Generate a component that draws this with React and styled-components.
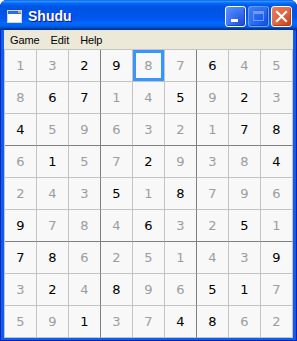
import React from 'react'
import styled, { createGlobalStyle } from 'styled-components'

const GlobalStyle = createGlobalStyle`
  html, body { margin: 0; padding: 0; background: #fff; }
  body { font-family: "DejaVu Sans", sans-serif; }
`

// "*" marks the black (given) digits
const rows = [
  '1 3 2* 9* 8 7 6* 4 5',
  '8 6* 7* 1 4 5* 9 2* 3',
  '4* 5 9 6 3 2 1 7* 8*',
  '6 1* 5 7 2* 9 3 8 4*',
  '2 4 3 5* 1 8* 7 9 6',
  '9* 7 8 4 6* 3 2 5* 1',
  '7* 8* 6 2 5 1 4 3 9*',
  '3 2* 4 8* 9 6 5* 1* 7',
  '5 9 1* 3 7 4* 8* 6 2',
].map(r => r.split(' ').map(s => ({ value: s[0], given: s.length > 1 })))

const selected = { row: 0, col: 4 }

export default function App() {
  return <>
    <GlobalStyle />
    <Window>
      <TitleBar>
        <AppIcon viewBox="0 0 15 13">
          <rect x="0.5" y="0.5" width="14" height="12" fill="#fff" stroke="#c9d6ee" />
          <rect x="1" y="1" width="13" height="3" fill="#2e6ce0" />
          <rect x="11" y="1" width="3" height="2" fill="#f0a050" />
        </AppIcon>
        <Title>Shudu</Title>
        <Controls>
          <CtrlButton>
            <svg width="19" height="19" viewBox="0 0 19 19">
              <rect x="5" y="12" width="7" height="3" fill="#fff" />
            </svg>
          </CtrlButton>
          <CtrlButton disabled>
            <svg width="19" height="19" viewBox="0 0 19 19">
              <rect x="4.5" y="4.5" width="10" height="9" fill="none" stroke="#9db8f2" />
              <rect x="5" y="5" width="9" height="2" fill="#9db8f2" />
            </svg>
          </CtrlButton>
          <CtrlButton $close>
            <svg width="19" height="19" viewBox="0 0 19 19">
              <path d="M5 5 L14 14 M14 5 L5 14" stroke="#fff" strokeWidth="2.2" strokeLinecap="square" />
            </svg>
          </CtrlButton>
        </Controls>
      </TitleBar>
      <Body>
        <MenuBar>
          <MenuItem>Game</MenuItem>
          <MenuItem>Edit</MenuItem>
          <MenuItem>Help</MenuItem>
        </MenuBar>
        <Board>
          {rows.map((row, r) => row.map((cell, c) => (
            <Cell
              key={`${r}-${c}`}
              $right={c % 3 === 2 && c < 8}
              $bottom={r % 3 === 2 && r < 8}
              $given={cell.given}
              $selected={r === selected.row && c === selected.col}
            >
              {cell.value}
            </Cell>
          )))}
        </Board>
      </Body>
    </Window>
  </>
}

const Window = styled.div`
  width: 297px;
  height: 341px;
  box-sizing: border-box;
  border-radius: 7px 7px 0 0;
  background: #0c5ef0;
  box-shadow: inset 1px 0 #0024b8, inset -1px 0 #0024b8, inset 0 -1px #0024b8;
  display: flex;
  flex-direction: column;
  overflow: hidden;
`

const TitleBar = styled.div`
  height: 30px;
  flex: none;
  display: flex;
  align-items: center;
  padding: 0 5px 0 7px;
  border-radius: 7px 7px 0 0;
  background: linear-gradient(180deg, #0058ee 0%, #3593ff 4%, #288eff 6%, #127dff 8%, #036ffc 10%, #0262ee 14%, #0057e5 20%, #0054e3 24%, #0055eb 56%, #005bf5 66%, #026afe 76%, #0062ef 86%, #0052d6 92%, #0040ab 94%, #003092 100%);
`

const AppIcon = styled.svg`
  width: 15px;
  height: 13px;
  margin-top: 2px;
  flex: none;
`

const Title = styled.div`
  margin-left: 6px;
  color: #fff;
  font-family: "Liberation Sans", "DejaVu Sans", sans-serif;
  font-weight: bold;
  font-size: 14px;
  text-shadow: 1px 1px #0f1089;
  flex: 1;
  padding-top: 1px;
`

const Controls = styled.div`
  display: flex;
  gap: 2px;
  padding-top: 2px;
`

const CtrlButton = styled.div`
  width: 21px;
  height: 21px;
  box-sizing: border-box;
  border: 1px solid ${p => p.disabled ? 'rgba(255,255,255,0.5)' : '#fff'};
  border-radius: 3px;
  display: flex;
  align-items: center;
  justify-content: center;
  background: ${p => p.$close
    ? 'radial-gradient(circle at 85% 85%, #cc4620 0%, #dc6540 45%, #e77e5e 100%)'
    : 'radial-gradient(circle at 85% 85%, #1c4fe0 0%, #3a72f2 50%, #5d94fc 100%)'};
  box-shadow: inset -1px -1px 1px ${p => p.$close ? '#b83a14' : '#1840c8'};
  opacity: ${p => p.disabled ? 0.7 : 1};
`

const Body = styled.div`
  flex: 1;
  margin: 0 4px 3px;
  display: flex;
  flex-direction: column;
  background: #ece9d8;
`

const MenuBar = styled.div`
  height: 19px;
  flex: none;
  display: flex;
  align-items: center;
  background: #ece9d8;
  font-family: "Liberation Sans", sans-serif;
  font-size: 11px;
  color: #000;
`

const MenuItem = styled.div`
  padding: 0 5px 0 6px;
  letter-spacing: -0.1px;
`

const Board = styled.div`
  display: grid;
  grid-template-columns: repeat(9, 32px);
  grid-template-rows: repeat(9, 32px);
  border-top: 1px solid #c3c3c3;
  border-left: 1px solid #c3c3c3;
  background: #f8f8f8;
`

const Cell = styled.div`
  box-sizing: border-box;
  display: flex;
  align-items: center;
  justify-content: center;
  border-right: 1px solid ${p => p.$right ? '#7f7f7f' : '#c3c3c3'};
  border-bottom: 1px solid ${p => p.$bottom ? '#7f7f7f' : '#c3c3c3'};
  font-family: "DejaVu Sans", sans-serif;
  font-size: 13px;
  color: ${p => p.$given ? '#000' : '#9c9c9c'};
  box-shadow: ${p => p.$selected ? 'inset 0 0 0 3px #3496ff' : 'none'};
`
